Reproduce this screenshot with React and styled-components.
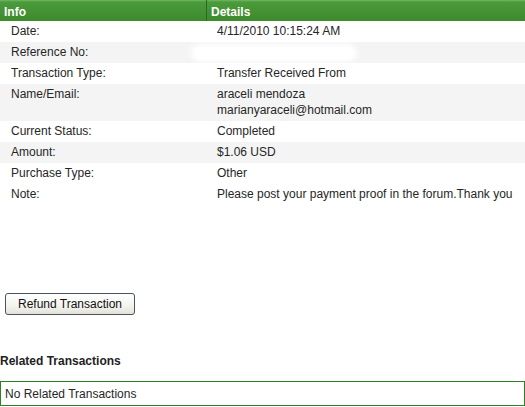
import React from "react";
import styled, { createGlobalStyle } from "styled-components";

const Global = createGlobalStyle`
  body {
    margin: 0;
    background: #fff;
    font-family: "Liberation Sans", Arial, sans-serif;
    font-size: 12px;
    color: #222;
  }
`;

const Page = styled.div`
  width: 525px;
`;

const Table = styled.div`
  display: grid;
  grid-template-columns: 206px 1fr;
`;

const HeadCell = styled.div`
  height: 21px;
  box-sizing: border-box;
  padding: 3px 4px 0;
  display: flex;
  align-items: center;
  color: #fff;
  font-weight: bold;
  font-size: 12px;
  background: linear-gradient(#74b865 0px, #4b9a3b 2px, #3c8a2c 100%);
  border-left: ${(p) => (p.divider ? "1px solid #2a6a1e" : "none")};
`;

const Row = styled.div`
  display: contents;
`;

const Cell = styled.div`
  padding: ${(p) => (p.tall ? "2px 0 3px 11px" : "3px 0 3px 11px")};
  line-height: ${(p) => (p.tall ? "16px" : "15px")};
  background: ${(p) => (p.shade ? "#f4f4f4" : "#fff")};
  color: #262626;
  position: relative;
`;

const Blur = styled.span`
  position: absolute;
  left: -12px;
  top: 5px;
  width: 160px;
  height: 12px;
  border-radius: 8px;
  background: #fff;
  box-shadow: 0 0 6px 3px #fff;
`;

const Spacer = styled.div`
  height: 88px;
`;

const Button = styled.button`
  display: block;
  margin-left: 5px;
  width: 130px;
  height: 22px;
  font-family: "Liberation Sans", Arial, sans-serif;
  font-size: 12px;
  color: #111;
  border: 1px solid #4a5360;
  border-radius: 3px;
  background: linear-gradient(#ffffff, #f3f3ee 60%, #e3e2da);
  padding: 0;
`;

const Heading = styled.div`
  margin-top: 39px;
  font-weight: bold;
  color: #222;
  line-height: 14px;
`;

const Box = styled.div`
  margin-top: 13px;
  border: 1px solid #2f7f25;
  height: 23px;
  display: flex;
  align-items: center;
  padding-left: 4px;
  color: #262626;
`;

const rows = [
  ["Date:", "4/11/2010 10:15:24 AM"],
  ["Reference No:", null, true],
  ["Transaction Type:", "Transfer Received From"],
  ["Name/Email:", ["araceli mendoza", "marianyaraceli@hotmail.com"], true],
  ["Current Status:", "Completed"],
  ["Amount:", "$1.06 USD", true],
  ["Purchase Type:", "Other"],
  ["Note:", "Please post your payment proof in the forum.Thank you"],
];

export default function App() {
  return (
    <Page>
      <Global />
      <Table>
        <HeadCell>Info</HeadCell>
        <HeadCell divider>Details</HeadCell>
        {rows.map(([label, value, shade]) => {
          const tall = Array.isArray(value);
          return (
            <Row key={label}>
              <Cell shade={shade} tall={tall}>
                {label}
              </Cell>
              <Cell shade={shade} tall={tall}>
                {value === null ? (
                  <Blur />
                ) : tall ? (
                  value.map((v) => <div key={v}>{v}</div>)
                ) : (
                  value
                )}
              </Cell>
            </Row>
          );
        })}
      </Table>
      <Spacer />
      <Button>Refund Transaction</Button>
      <Heading>Related Transactions</Heading>
      <Box>No Related Transactions</Box>
    </Page>
  );
}
